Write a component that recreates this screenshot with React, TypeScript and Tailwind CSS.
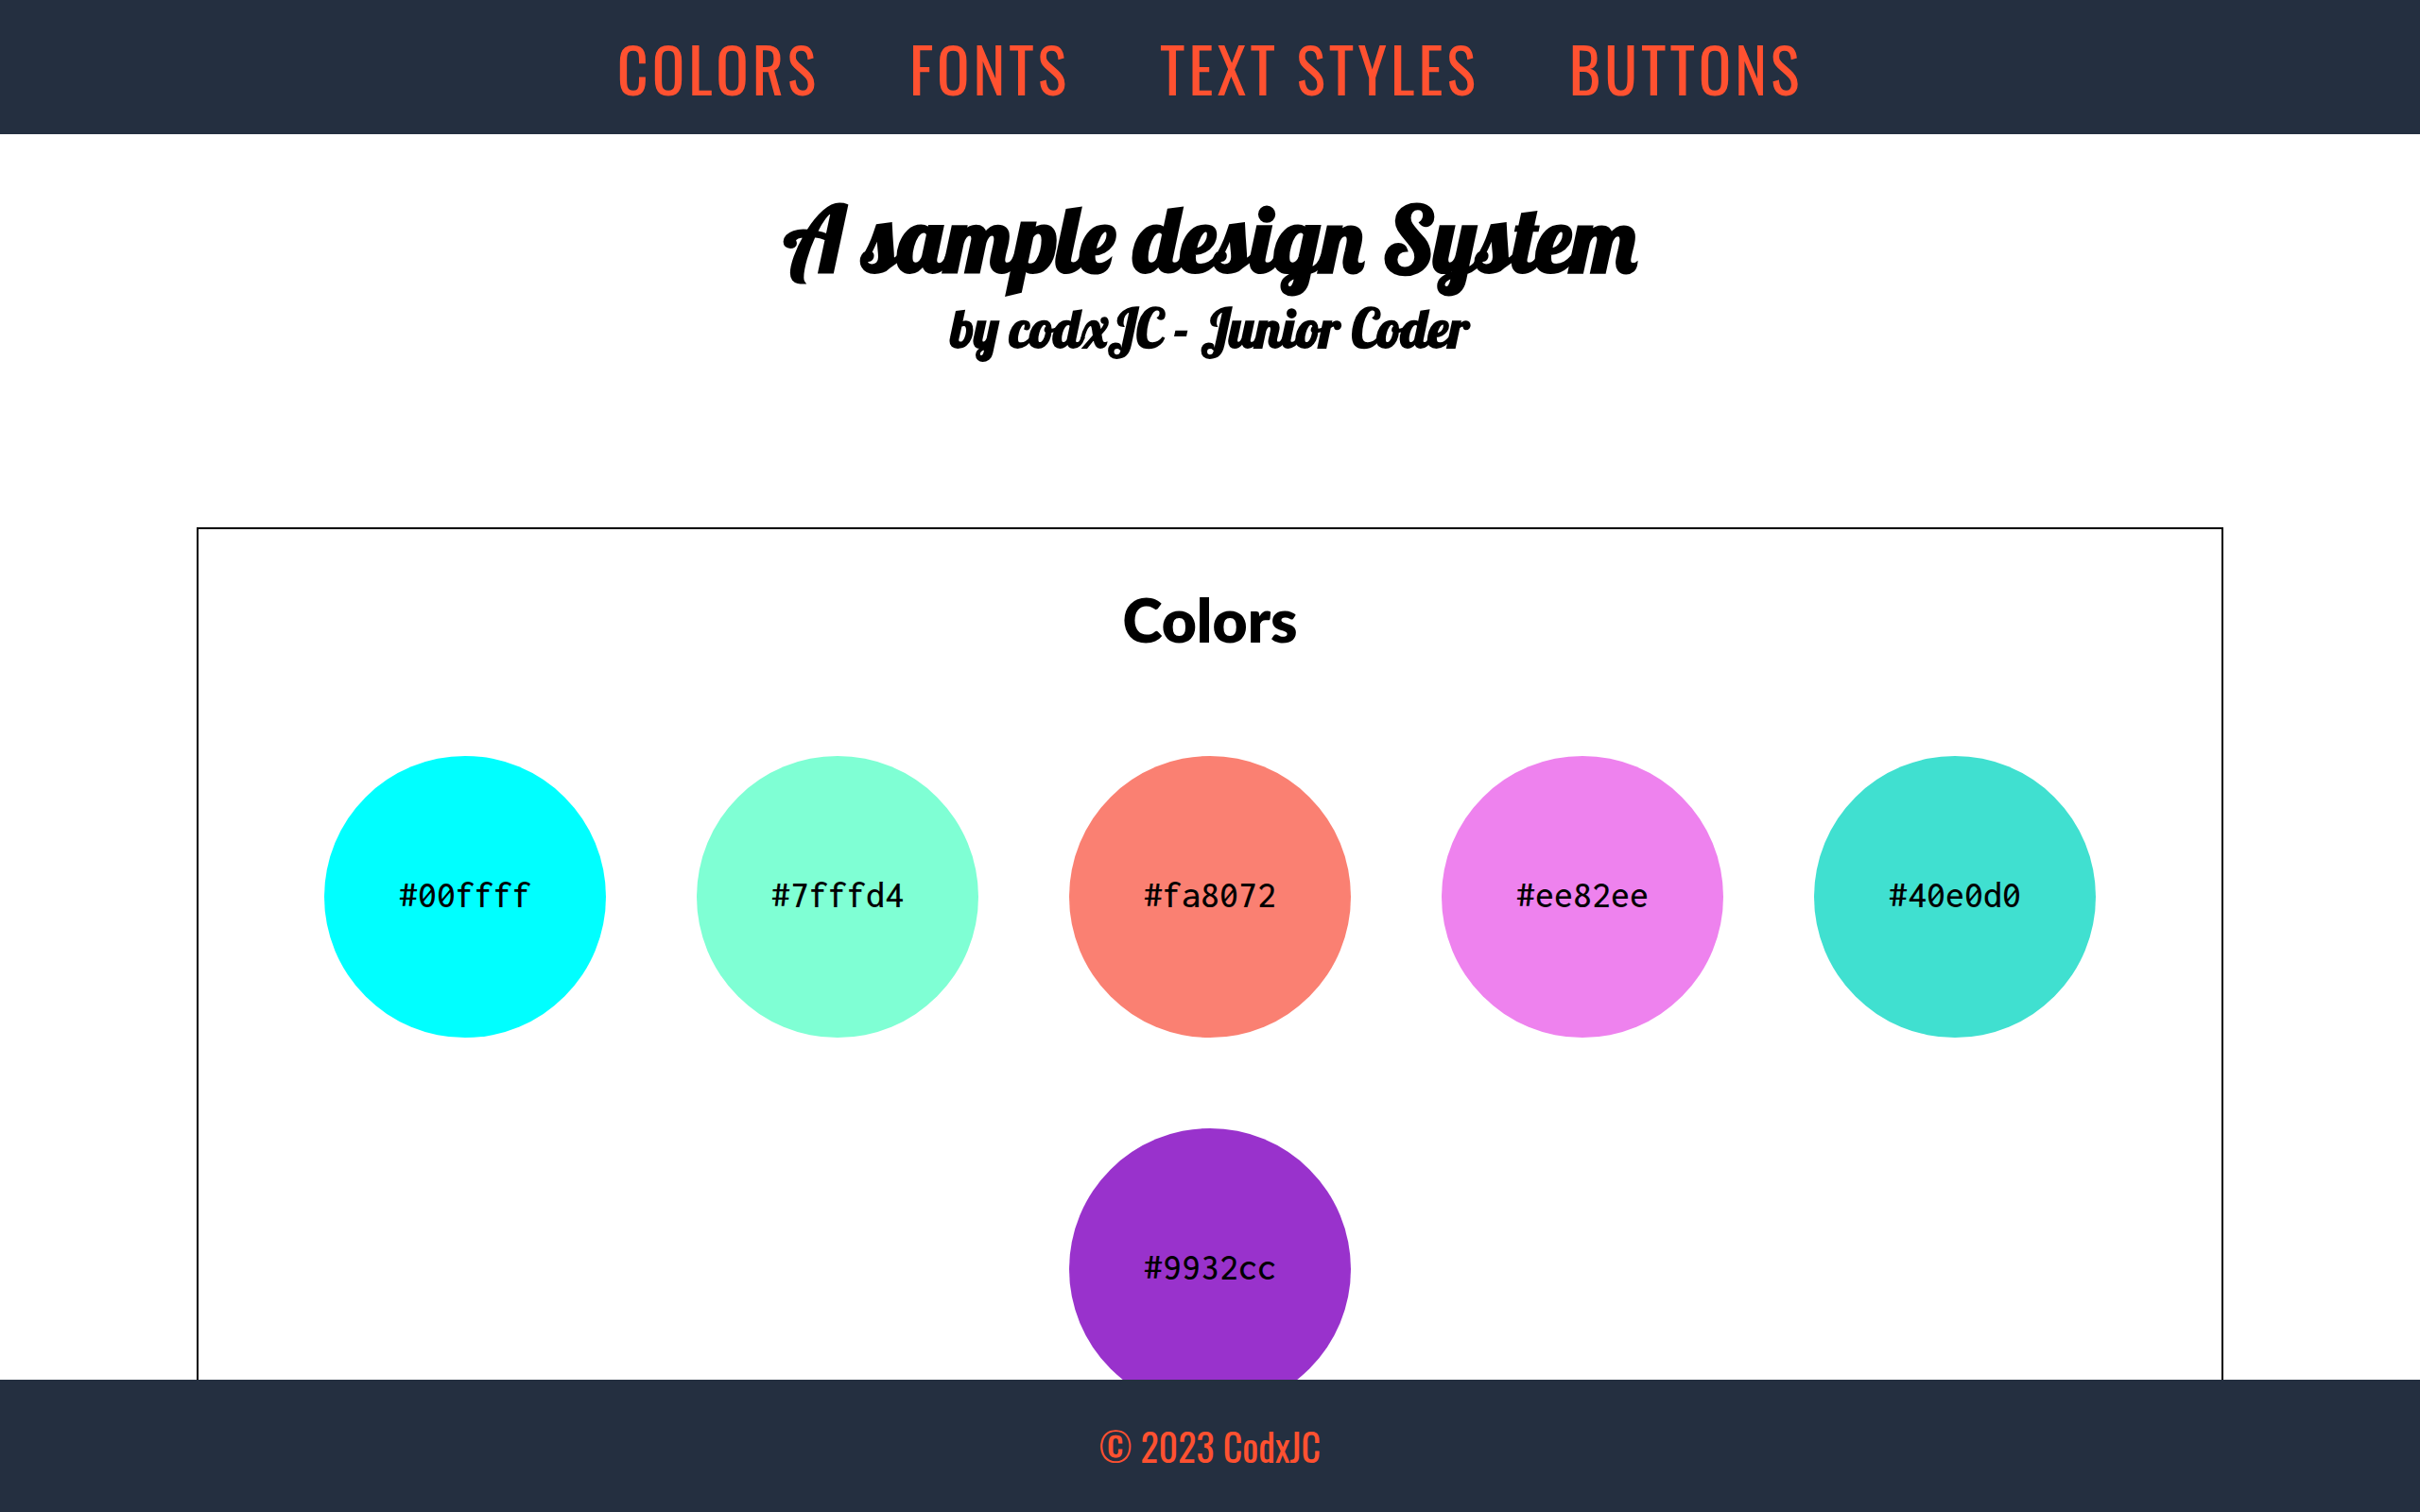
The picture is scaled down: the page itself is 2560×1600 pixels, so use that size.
const links = [
  { label: 'Colors', href: '#colors' },
  { label: 'Fonts', href: '#fonts' },
  { label: 'Text styles', href: '#text-styles' },
  { label: 'Buttons', href: '#buttons' },
];

const swatches = ['#00ffff', '#7fffd4', '#fa8072', '#ee82ee', '#40e0d0', '#9932cc'];

function NavBar() {
  return (
    <header className="bg-[#242f40] px-6 pt-6 pb-[22px] font-['Oswald','Roboto_Condensed',sans-serif]">
      <nav aria-label="Main">
        <ul className="flex flex-wrap justify-center gap-x-[95px]">
          {links.map((link) => (
            <li key={link.href}>
              <a
                href={link.href}
                className="block text-[64px] leading-[96px] tracking-[4px] text-[#ff5130] uppercase"
              >
                {link.label}
              </a>
            </li>
          ))}
        </ul>
      </nav>
    </header>
  );
}

function Swatch({ color }: { color: string }) {
  return (
    <li
      className="flex size-[298px] items-center justify-center rounded-full pb-1 font-['Inconsolata','DejaVu_Sans_Mono',monospace] text-[40px] leading-[42px] font-medium"
      style={{ backgroundColor: color }}
    >
      {color}
    </li>
  );
}

export default function App() {
  return (
    <div className="flex h-screen flex-col overflow-hidden bg-white text-black">
      <NavBar />
      <main className="min-h-0 flex-1 overflow-hidden">
        <div className="pt-[50px] text-center font-['Lobster','Pacifico',cursive] font-bold">
          <h1 className="text-[96px] leading-[120px]">A sample design System</h1>
          <h2 className="text-[56px] leading-[70px]">by codxJC - Junior Coder</h2>
        </div>
        <section
          id="colors"
          aria-labelledby="colors-title"
          className="mx-52 mt-44 border-2 border-black px-24 pt-14 pb-24"
        >
          <h2
            id="colors-title"
            className="text-center font-['Lato',sans-serif] text-[64px] leading-[80px] font-extrabold"
          >
            Colors
          </h2>
          <ul className="mt-[104px] flex flex-wrap justify-center gap-24">
            {swatches.map((color) => (
              <Swatch key={color} color={color} />
            ))}
          </ul>
        </section>
      </main>
      <footer className="bg-[#242f40] px-6 py-10 text-center font-['Oswald','Roboto_Condensed',sans-serif] text-[40px] leading-[60px] text-[#ff5130]">
        <p>© 2023 CodxJC</p>
      </footer>
    </div>
  );
}
